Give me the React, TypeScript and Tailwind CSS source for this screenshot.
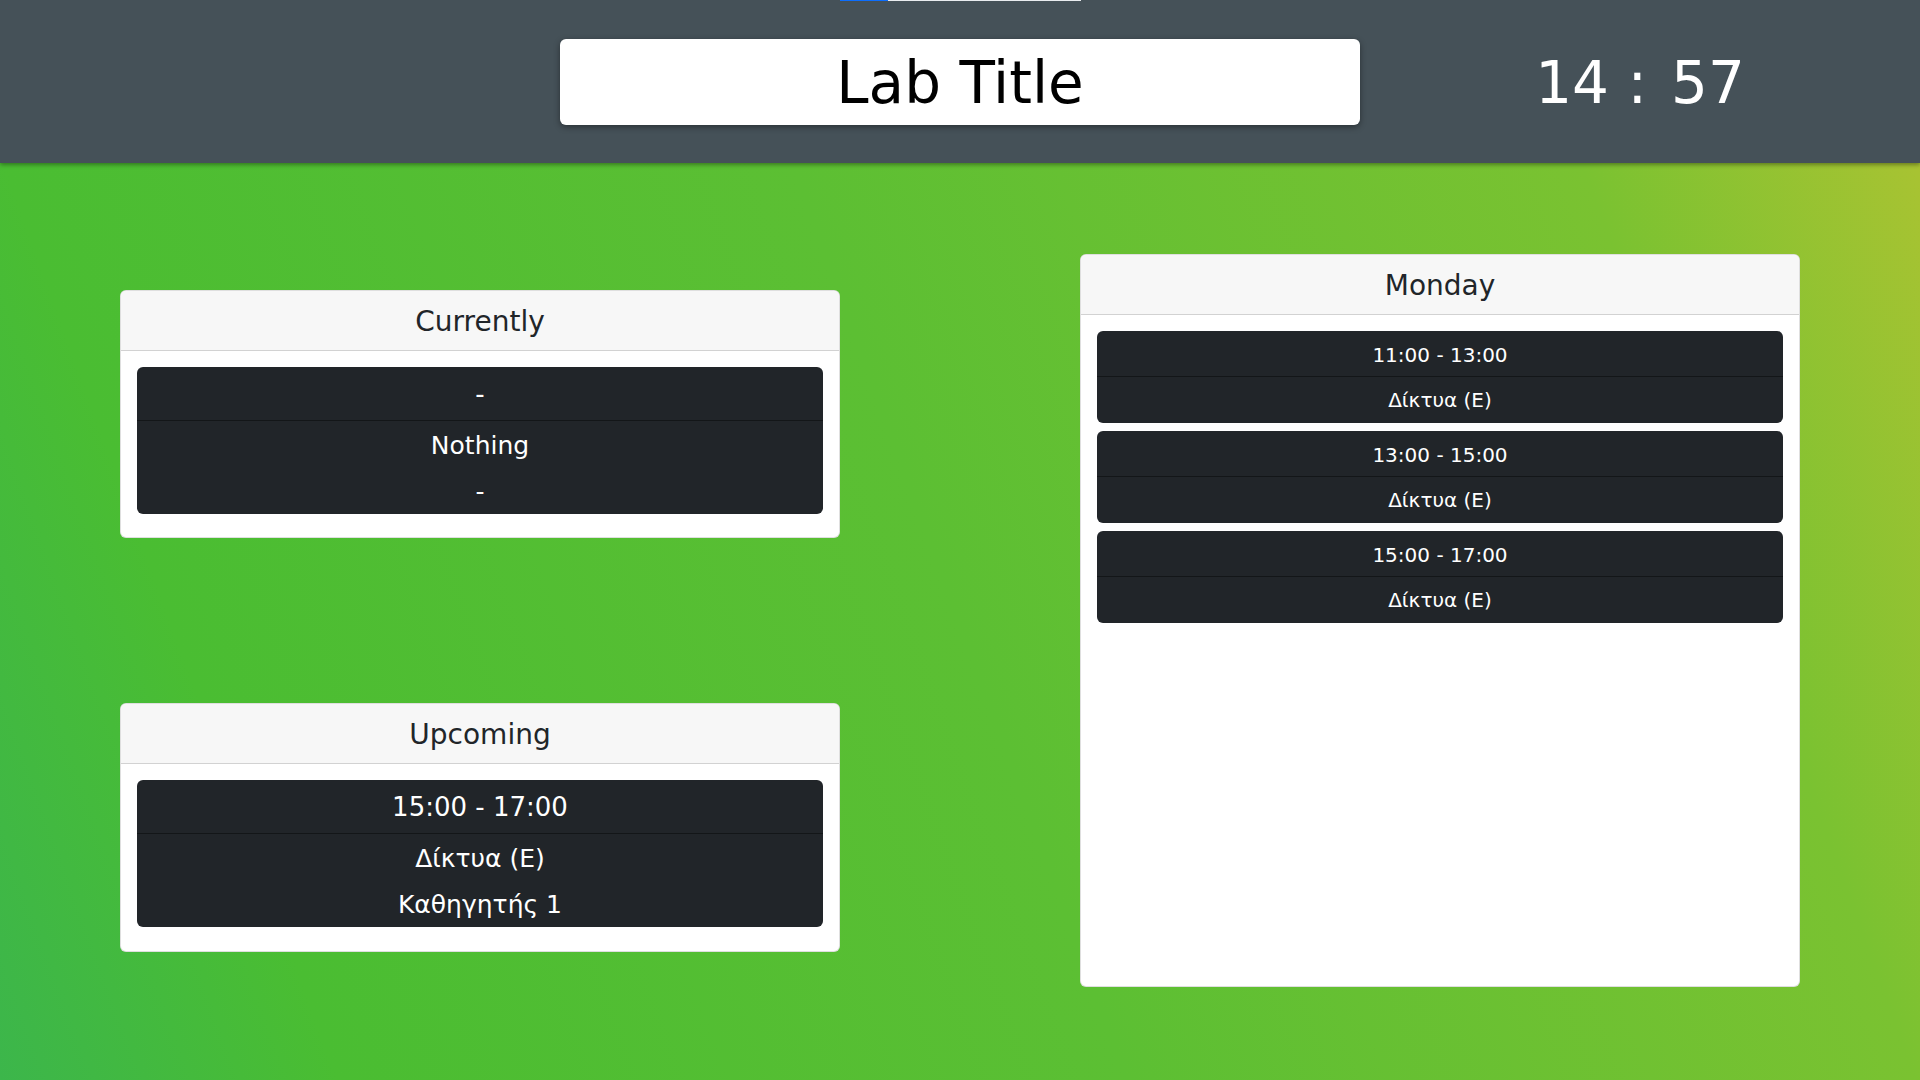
import React from 'react';

type Slot = { time: string; title: string };

const mondaySlots: Slot[] = [
  { time: '11:00 - 13:00', title: 'Δίκτυα (Ε)' },
  { time: '13:00 - 15:00', title: 'Δίκτυα (Ε)' },
  { time: '15:00 - 17:00', title: 'Δίκτυα (Ε)' },
];

function Card({ title, className, children }: { title: string; className?: string; children: React.ReactNode }) {
  return (
    <div className={`w-[720px] mx-auto flex flex-col bg-white border border-black/[.125] rounded-[6px] overflow-hidden ${className ?? ''}`}>
      <div className="h-[60px] shrink-0 flex items-center justify-center pt-[2px] bg-[#f7f7f7] border-b border-black/[.15] text-[28px] text-[#212529]">
        {title}
      </div>
      {children}
    </div>
  );
}

// bloc sombre avec trois lignes : horaire, matière, enseignant
function InfoBlock({ top, middle, bottom }: { top: string; middle: string; bottom: string }) {
  return (
    <div className="bg-[#212529] rounded-[6px] text-white text-center">
      <div className="h-[54px] flex items-center justify-center pt-[2px] text-[26px] border-b border-black/40">{top}</div>
      <div className="h-[47px] flex items-center justify-center pt-[2px] text-[25px]">{middle}</div>
      <div className="h-[46px] flex items-center justify-center pt-[2px] text-[25px]">{bottom}</div>
    </div>
  );
}

export default function App() {
  return (
    <div className="min-h-screen flex flex-col" style={{ fontFamily: '"DejaVu Sans", Verdana, sans-serif' }}>
      <header className="relative z-10 h-[163px] shrink-0 grid grid-cols-[560px_800px_1fr] items-center bg-[#455158] shadow-[0_2px_4px_rgba(0,0,0,0.35)]">
        <div className="absolute top-0 left-[840px] w-[241px] h-px bg-[#e9ecef]">
          <div className="w-[48px] h-full bg-[#0d6efd]" />
        </div>
        <div />
        <div className="h-[86px] flex items-center justify-center pt-[3px] bg-white rounded-[6px] shadow-[0_2px_6px_rgba(0,0,0,0.4)] text-[58px] text-black">
          Lab Title
        </div>
        <div className="flex justify-center pt-[3px] text-[58px] text-white whitespace-pre">
          <span>14 :</span>
          <span className="ml-[24px]">57</span>
        </div>
      </header>

      <main className="flex-1 grid grid-cols-2 py-[91px] bg-[linear-gradient(70deg,#3cb64b_0%,#4abd32_15%,#5cbf33_50%,#7ac231_85%,#a8c332_100%)]">
        <div className="flex flex-col pt-[36px] gap-[165px]">
          <Card title="Currently" className="h-[248px]">
            <div className="px-4 pt-4">
              <InfoBlock top="-" middle="Nothing" bottom="-" />
            </div>
          </Card>
          <Card title="Upcoming" className="h-[249px]">
            <div className="px-4 pt-4">
              <InfoBlock top="15:00 - 17:00" middle="Δίκτυα (Ε)" bottom="Καθηγητής 1" />
            </div>
          </Card>
        </div>

        <div>
          <Card title="Monday" className="h-[733px]">
            <div className="px-4 pt-4 flex flex-col gap-2">
              {mondaySlots.map((s, i) => (
                <div key={i} className="bg-[#212529] rounded-[6px] text-white text-center text-[20px]">
                  <div className="h-[46px] flex items-center justify-center pt-[2px] border-b border-black/40">{s.time}</div>
                  <div className="h-[46px] flex items-center justify-center">{s.title}</div>
                </div>
              ))}
            </div>
          </Card>
        </div>
      </main>
    </div>
  );
}
